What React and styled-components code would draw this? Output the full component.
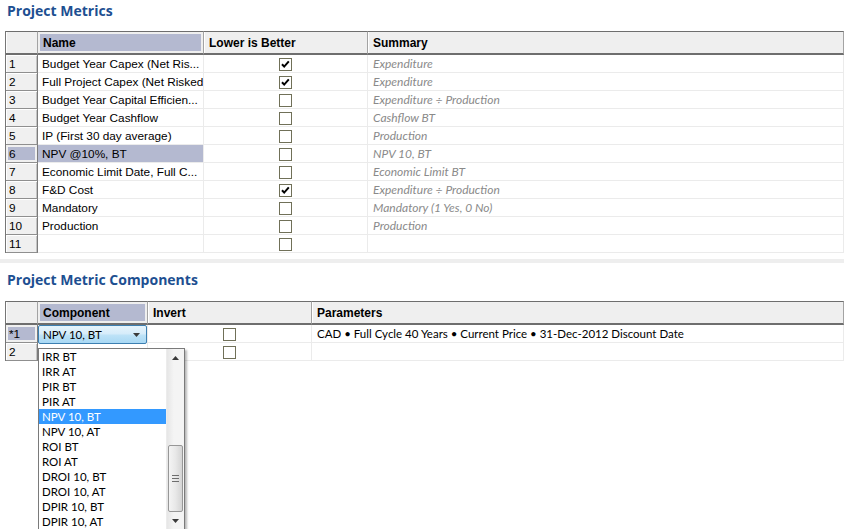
import React from 'react';
import styled, { createGlobalStyle } from 'styled-components';

const GlobalStyle = createGlobalStyle`
  html, body {
    margin: 0;
    padding: 0;
    background: #ffffff;
  }
  body {
    font-family: "Liberation Sans", Arial, sans-serif;
    font-size: 11.8px;
    color: #000;
  }
`;

const Page = styled.div`
  width: 844px;
  height: 529px;
  overflow: hidden;
`;

const Section = styled.section`
  padding-left: 5px;
`;

const Title = styled.h2`
  margin: 0;
  box-sizing: border-box;
  height: ${p => p.$h}px;
  padding: ${p => p.$top}px 0 0 2px;
  font: bold 14px "Open Sans", "DejaVu Sans", sans-serif;
  line-height: 18px;
  color: #1d4f91;
`;

const Divider = styled.div`
  height: 4px;
  margin-top: 6px;
  background: #eeeeee;
`;

const Grid = styled.div`
  display: grid;
  grid-template-columns: ${p => p.$cols};
  grid-auto-rows: 18px;
  grid-template-rows: 24px;
  border-left: 1px solid #767676;
`;

const HeadCell = styled.div`
  box-sizing: border-box;
  height: 24px;
  border-top: 1px solid #6e6e6e;
  border-bottom: 2px solid #6e6e6e;
  border-right: 1px solid #a3a3a3;
  background: ${p => (p.$selected ? '#b4b9d0' : '#efefef')};
  box-shadow: ${p => (p.$selected ? 'inset 0 0 0 2px #efefef' : 'inset 1px 0 0 #ffffff')};
  padding: 1px 5px 0;
  font: bold 12px "Liberation Sans", Arial, sans-serif;
  line-height: 21px;
  white-space: nowrap;
  overflow: hidden;
`;

const RowHead = styled.div`
  box-sizing: border-box;
  border-bottom: 1px solid #8f8f8f;
  border-right: 1px solid #7c7c7c;
  background: ${p => (p.$selected ? '#b4b9d0' : '#f0f0f0')};
  box-shadow: ${p => (p.$selected
    ? 'inset 0 0 0 2px #f0f0f0'
    : 'inset 1px 1px 0 #ffffff, inset -1px 0 0 #c4c4c4')};
  padding: 1px 0 0 3px;
  line-height: 17px;
`;

const Cell = styled.div`
  position: relative;
  box-sizing: border-box;
  border-bottom: 1px solid #ebebeb;
  border-right: 1px solid #ebebeb;
  background: ${p => (p.$selected ? '#b4b9d0' : '#ffffff')};
  padding-left: ${p => p.$pad ?? 4}px;
  padding-top: 1px;
  line-height: 17px;
  white-space: nowrap;
  overflow: ${p => (p.$overlay ? 'visible' : 'hidden')};
  display: ${p => (p.$center ? 'flex' : 'block')};
  justify-content: center;
  align-items: center;
  z-index: ${p => (p.$overlay ? 2 : 'auto')};
`;

const SummaryText = styled.span`
  font: italic 12px Lato, "Liberation Sans", sans-serif;
  color: #8a8a8a;
`;

const ParamText = styled.span`
  font: 11.5px Lato, "Liberation Sans", sans-serif;
  color: #000;
`;

const Box = styled.span`
  box-sizing: border-box;
  display: inline-flex;
  align-items: center;
  justify-content: center;
  width: 13px;
  height: 13px;
  border: 1px solid #707058;
  background: #ffffff;
`;

const Combo = styled.div`
  position: absolute;
  left: 0;
  top: 0;
  right: 0;
  height: 19px;
  box-sizing: border-box;
  border: 1px solid #3c7fb1;
  border-radius: 2px;
  background: linear-gradient(#e6f4fc 0%, #d6ecfa 45%, #bde2f7 55%, #a8d8f4 100%);
  display: flex;
  align-items: center;
  justify-content: space-between;
  padding: 0 6px 0 4px;
  font: 11.5px Lato, "Liberation Sans", sans-serif;
  line-height: 17px;
`;

const List = styled.div`
  position: absolute;
  left: 0;
  top: 23px;
  width: 147px;
  height: 182px;
  box-sizing: border-box;
  border: 1px solid #7a7a7a;
  background: #ffffff;
  box-shadow: 2px 2px 2px rgba(0, 0, 0, 0.28);
  display: flex;
  font: 11.5px Lato, "Liberation Sans", sans-serif;
`;

const Items = styled.div`
  flex: 1;
  display: flex;
  flex-direction: column;
`;

const Item = styled.div`
  height: 15px;
  line-height: 15px;
  padding-left: 3px;
  background: ${p => (p.$active ? '#3399ff' : 'transparent')};
  color: ${p => (p.$active ? '#ffffff' : '#000000')};
`;

const ScrollBar = styled.div`
  width: 17px;
  display: flex;
  flex-direction: column;
  background: linear-gradient(to right, #e6e6e6, #f4f4f4 40%, #f4f4f4);
  border-left: 1px solid #ececec;
`;

const ScrollBtn = styled.div`
  height: 17px;
  display: flex;
  align-items: center;
  justify-content: center;
`;

const Track = styled.div`
  flex: 1;
`;

const Thumb = styled.div`
  box-sizing: border-box;
  margin: 79px 0 0 1px;
  width: 15px;
  height: 67px;
  border: 1px solid #979797;
  border-radius: 2px;
  background: linear-gradient(to right, #f4f4f4, #e8e8e8 50%, #d4d4d4);
  display: flex;
  align-items: center;
  justify-content: center;
`;

const Check = ({ on }) => (
  <Box>
    {on && (
      <svg width="11" height="11" viewBox="0 0 11 11">
        <path d="M2 5.2 L4.2 7.6 L8.8 2.4" fill="none" stroke="#000" strokeWidth="2" />
      </svg>
    )}
  </Box>
);

const Arrow = ({ down }) => (
  <svg width="7" height="4" viewBox="0 0 7 4">
    <path d={down ? 'M0 0 H7 L3.5 4 Z' : 'M0 4 H7 L3.5 0 Z'} fill="#3a3a3a" />
  </svg>
);

const Grip = () => (
  <svg width="7" height="7" viewBox="0 0 7 7">
    <path d="M0 0.5 H7 M0 3.5 H7 M0 6.5 H7" stroke="#6e6e6e" strokeWidth="1" />
  </svg>
);

const metrics = [
  { name: 'Budget Year Capex (Net Ris...', lower: true, summary: 'Expenditure' },
  { name: 'Full Project Capex (Net Risked', lower: true, summary: 'Expenditure' },
  { name: 'Budget Year Capital Efficien...', lower: false, summary: 'Expenditure ÷ Production' },
  { name: 'Budget Year Cashflow', lower: false, summary: 'Cashflow BT' },
  { name: 'IP (First 30 day average)', lower: false, summary: 'Production' },
  { name: 'NPV @10%, BT', lower: false, summary: 'NPV 10, BT', selected: true },
  { name: 'Economic Limit Date, Full C...', lower: false, summary: 'Economic Limit BT' },
  { name: 'F&D Cost', lower: true, summary: 'Expenditure ÷ Production' },
  { name: 'Mandatory', lower: false, summary: 'Mandatory (1 Yes, 0 No)' },
  { name: 'Production', lower: false, summary: 'Production' },
  { name: '', lower: false, summary: '' },
];

const options = [
  'IRR BT', 'IRR AT', 'PIR BT', 'PIR AT', 'NPV 10, BT', 'NPV 10, AT',
  'ROI BT', 'ROI AT', 'DROI 10, BT', 'DROI 10, AT', 'DPIR 10, BT', 'DPIR 10, AT',
];

const App = () => (
  <Page>
    <GlobalStyle />
    <Section>
      <Title $h={31} $top={2}>Project Metrics</Title>
      <Grid $cols="32px 166px 164px 1fr">
        <HeadCell />
        <HeadCell $selected>Name</HeadCell>
        <HeadCell>Lower is Better</HeadCell>
        <HeadCell>Summary</HeadCell>
        {metrics.map((m, i) => (
          <React.Fragment key={i}>
            <RowHead $selected={m.selected}>{i + 1}</RowHead>
            <Cell $selected={m.selected}>{m.name}</Cell>
            <Cell $center $pad={0}><Check on={m.lower} /></Cell>
            <Cell $pad={5}><SummaryText>{m.summary}</SummaryText></Cell>
          </React.Fragment>
        ))}
      </Grid>
    </Section>

    <Divider />

    <Section>
      <Title $h={38} $top={8}>Project Metric Components</Title>
      <Grid $cols="32px 110px 164px 1fr">
        <HeadCell />
        <HeadCell $selected>Component</HeadCell>
        <HeadCell>Invert</HeadCell>
        <HeadCell>Parameters</HeadCell>

        <RowHead $selected>*1</RowHead>
        <Cell $overlay>
          <Combo>
            <span>NPV 10, BT</span>
            <Arrow down />
          </Combo>
          <List>
            <Items>
              {options.map(o => (
                <Item key={o} $active={o === 'NPV 10, BT'}>{o}</Item>
              ))}
            </Items>
            <ScrollBar>
              <ScrollBtn><Arrow /></ScrollBtn>
              <Track>
                <Thumb><Grip /></Thumb>
              </Track>
              <ScrollBtn><Arrow down /></ScrollBtn>
            </ScrollBar>
          </List>
        </Cell>
        <Cell $center $pad={0}><Check on={false} /></Cell>
        <Cell $pad={5}>
          <ParamText>CAD • Full Cycle 40 Years • Current Price • 31-Dec-2012 Discount Date</ParamText>
        </Cell>

        <RowHead>2</RowHead>
        <Cell />
        <Cell $center $pad={0}><Check on={false} /></Cell>
        <Cell />
      </Grid>
    </Section>
  </Page>
);

export default App;
